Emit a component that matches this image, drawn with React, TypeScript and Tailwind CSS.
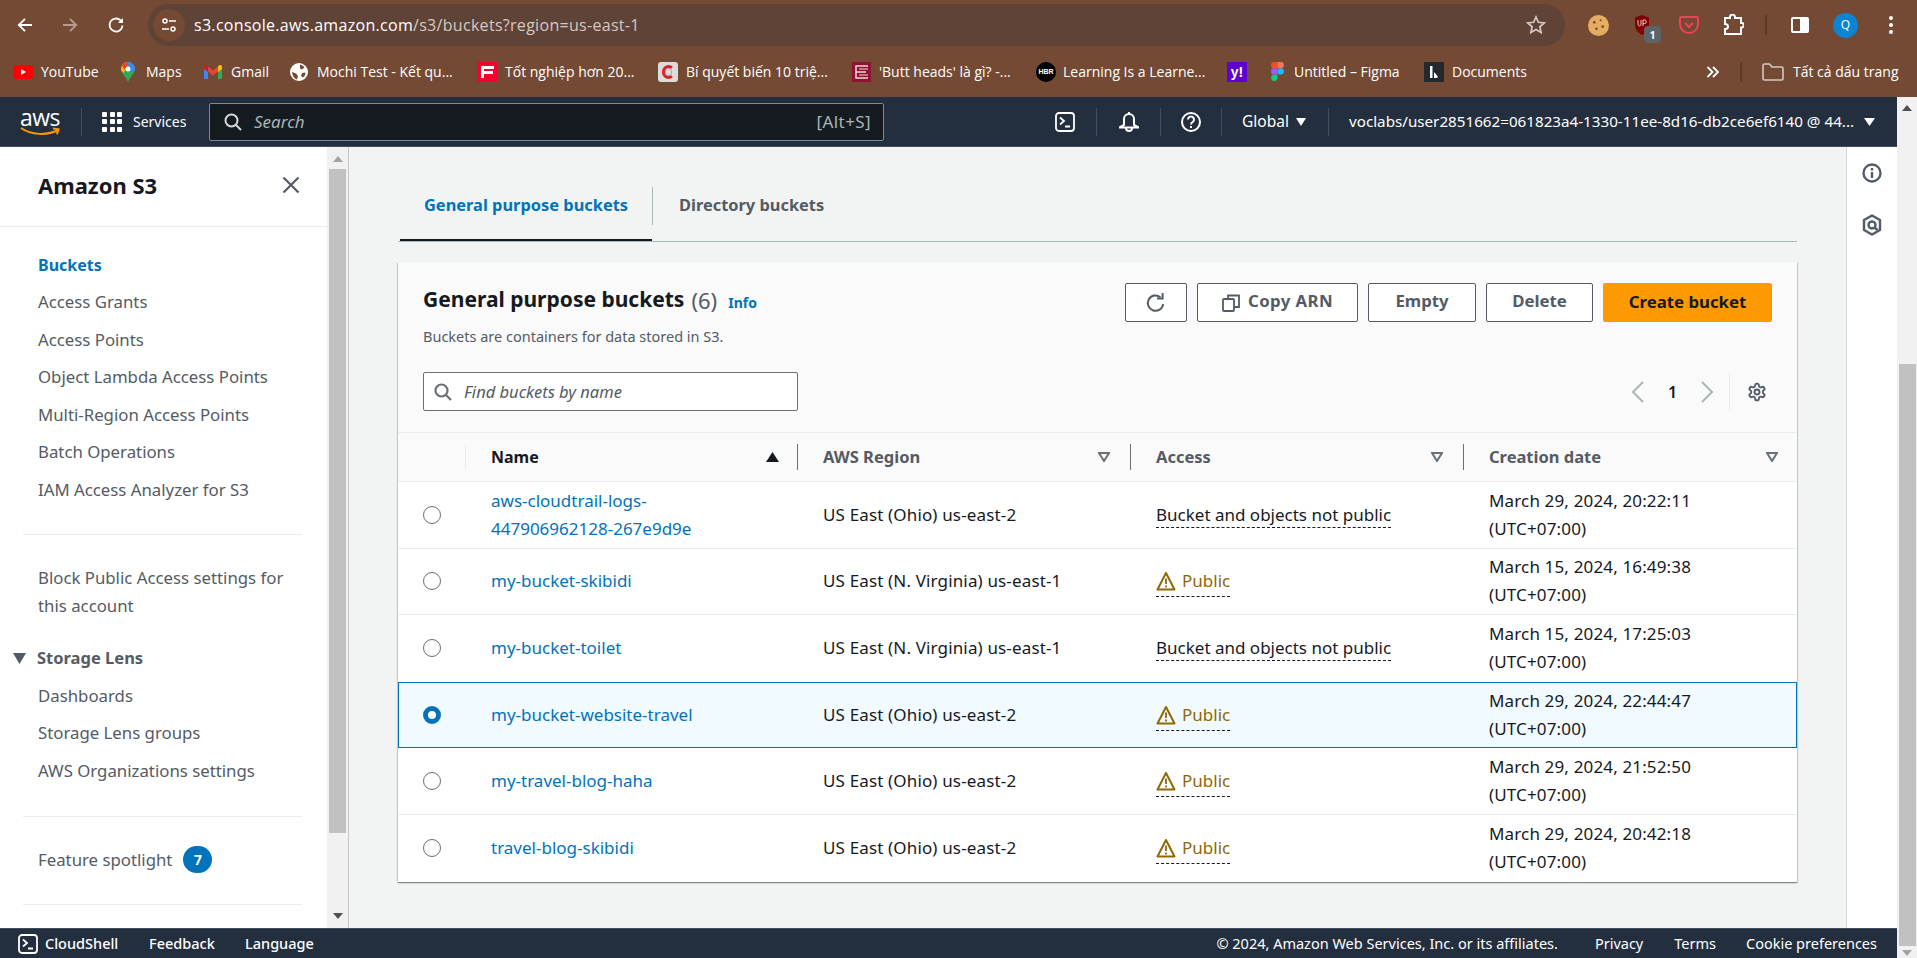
import React from "react";

const ui = "font-['Noto_Sans',sans-serif]";

function Arrow({ flip, className }: { flip?: boolean; className?: string }) {
  return (
    <svg width="18" height="18" viewBox="0 0 18 18" className={className} style={flip ? { transform: "scaleX(-1)" } : undefined} fill="none" stroke="currentColor" strokeWidth="1.8">
      <path d="M16 9H3M9 2.8 2.8 9 9 15.2" />
    </svg>
  );
}

function Terminal({ size = 20 }: { size?: number }) {
  return (
    <svg width={size} height={size} viewBox="0 0 20 20" fill="none" stroke="white" strokeWidth="1.8">
      <rect x="1" y="1" width="18" height="18" rx="3" />
      <path d="M5 5.5 9 9l-4 3.5M10 14.5h5" />
    </svg>
  );
}

function Favicon({ kind }: { kind: string }) {
  switch (kind) {
    case "yt":
      return (
        <svg width="20" height="14" viewBox="0 0 20 14"><rect width="20" height="14" rx="3.5" fill="#f00" /><path d="M8 4v6l5-3z" fill="#fff" /></svg>
      );
    case "maps":
      return (
        <svg width="14" height="20" viewBox="0 0 14 20">
          <path d="M7 0C3 0 0 3 0 7c0 4 4.500 7 7 13 2.500-6 7-9 7-13 0-4-3-7-7-7z" fill="#34a853" />
          <path d="M1 3.500C2 1.500 4 0 7 0l2 .3L2.500 11C1 9.500 0 8.500 0 7c0-1.300.3-2.500 1-3.500z" fill="#fbbc04" />
          <path d="M1 3.500C2 1.500 4 0 7 0v3.500L3.500 8z" fill="#ea4335" />
          <path d="M7 0c2 0 4 .8 5.500 2.800L9.500 5.500 7 3.500z" fill="#4285f4" />
          <path d="M12.500 2.800C13.500 4 14 5.500 14 7c0 .8-.2 1.500-.6 2.300L7 10l2.500-4.500z" fill="#4285f4" />
          <circle cx="7" cy="7" r="2.500" fill="#fff" />
        </svg>
      );
    case "gmail":
      return (
        <svg width="18" height="14" viewBox="0 0 18 14">
          <path d="M0 2v10.700C0 13.400.6 14 1.300 14H4V6z" fill="#4285f4" />
          <path d="M18 2v10.700c0 .7-.6 1.300-1.300 1.300H14V6z" fill="#34a853" />
          <path d="M14 1v6l4-3V2c0-2-1.800-2.500-3-1.500z" fill="#fbbc04" />
          <path d="M4 1v6L0 4V2C0 0 1.800-.5 3 .5z" fill="#c5221f" />
          <path d="M4 1.500 9 5.500l5-4V6.500L9 10.500 4 6.500z" fill="#ea4335" />
        </svg>
      );
    case "globe":
      return (
        <svg width="18" height="18" viewBox="0 0 18 18">
          <circle cx="9" cy="9" r="9" fill="#fff" />
          <path d="M10 1.500c2 .5 3.500 1.500 4.500 3L12 6.500 10 5.500zM2 9l4 1.500L8 13l-1 3.500C4 15.500 2.300 12.500 2 9zM12 10l3.500-.5c0 2-1 4-2.500 5L11 13z" fill="#744a35" />
        </svg>
      );
    case "f":
      return (
        <svg width="20" height="20" viewBox="0 0 20 20"><rect width="20" height="20" fill="#f5002f" /><path d="M4 4h13v3H7v2h9v3H7v4H4z" fill="#fff" /></svg>
      );
    case "c":
      return (
        <div className="w-5 h-5 rounded-[3px] bg-[#dcdcdc] flex items-center justify-center">
          <div className="w-[13px] h-[14px] rounded-full border-[3px] border-[#d8232a] border-r-[#dcdcdc] shadow-[inset_0_0_0_1px_#aaa]" />
        </div>
      );
    case "e":
      return (
        <div className="w-5 h-5 bg-[#8f1233] flex items-center justify-center">
          <svg width="14" height="14" viewBox="0 0 14 14" fill="none" stroke="#f3d6dc" strokeWidth="1.500"><path d="M13 1H1v12h12M1 7h10" /><path d="M4 4h9M4 10h9" strokeWidth="1" /></svg>
        </div>
      );
    case "hbr":
      return (
        <div className="w-5 h-5 rounded-full bg-black flex items-center justify-center text-white text-[7px] font-bold leading-none font-['Liberation_Sans',sans-serif]">HBR</div>
      );
    case "y":
      return (
        <div className="w-5 h-5 bg-[#5f01d1] flex items-center justify-center text-white text-[14px] font-black leading-none font-['Liberation_Sans',sans-serif]">y!</div>
      );
    case "figma":
      return (
        <svg width="13" height="19" viewBox="0 0 13 19">
          <path d="M3.200 0H6.500v6.300H3.200a3.150 3.150 0 0 1 0-6.300z" fill="#f24e1e" />
          <path d="M6.500 0h3.200a3.150 3.150 0 0 1 0 6.300H6.500z" fill="#ff7262" />
          <path d="M3.200 6.300H6.500v6.300H3.200a3.150 3.150 0 0 1 0-6.300z" fill="#a259ff" />
          <circle cx="9.700" cy="9.450" r="3.150" fill="#1abcfe" />
          <path d="M3.200 12.700H6.500v3.100a3.200 3.200 0 1 1-3.300-3.100z" fill="#0acf83" />
        </svg>
      );
    default:
      return (
        <div className="w-5 h-5 bg-[#23282d] flex items-center justify-center">
          <svg width="12" height="14" viewBox="0 0 12 14"><path d="M2 1h2.500v12H2zM6 7l3.500 4v2H6z" fill="#fff" /></svg>
        </div>
      );
  }
}

const bookmarks = [
  { k: "yt", t: "YouTube", l: 13, iw: 20, g: 8, w: 57 },
  { k: "maps", t: "Maps", l: 23, iw: 14, g: 11, w: 36 },
  { k: "gmail", t: "Gmail", l: 22, iw: 18, g: 9, w: 37 },
  { k: "globe", t: "Mochi Test - Kết qu...", l: 22, iw: 18, g: 9, w: 139 },
  { k: "f", t: "Tốt nghiệp hơn 20...", l: 21, iw: 20, g: 8, w: 132 },
  { k: "c", t: "Bí quyết biến 10 triệ...", l: 21, iw: 20, g: 8, w: 144 },
  { k: "e", t: "'Butt heads' là gì? -...", l: 22, iw: 19, g: 8, w: 136 },
  { k: "hbr", t: "Learning Is a Learne...", l: 21, iw: 20, g: 7, w: 142 },
  { k: "y", t: "", l: 22, iw: 20, g: 0, w: 0 },
  { k: "figma", t: "Untitled – Figma", l: 24, iw: 13, g: 10, w: 109 },
  { k: "doc", t: "Documents", l: 21, iw: 20, g: 8, w: 75 },
];

function BrowserChrome() {
  return (
    <div className="h-[97px] shrink-0 bg-[#744a35] text-white font-['Open_Sans',sans-serif]">
      <div className="h-[50px] flex items-start pt-[4px]">
        <div className="w-[148px] h-[42px] flex items-center shrink-0">
          <Arrow className="ml-[16px] text-white" />
          <Arrow flip className="ml-[27px] text-[#b79d90]" />
          <svg width="18" height="18" viewBox="0 0 18 18" className="ml-[28px]" fill="none" stroke="white" strokeWidth="1.800">
            <path d="M15.500 9.500A6.500 6.500 0 1 1 13.600 4.400L15.500 6.300" /><path d="M16 2v5h-5" fill="white" stroke="none" />
          </svg>
        </div>
        <div className="w-[1417px] h-[42px] rounded-full bg-[#5f4337] flex items-center pl-[5px] shrink-0">
          <div className="w-[32px] h-[32px] rounded-full bg-[#744a35] flex items-center justify-center">
            <svg width="16" height="16" viewBox="0 0 16 16" fill="none" stroke="white" strokeWidth="1.500">
              <circle cx="4" cy="4" r="2" /><path d="M8 4h7M1 12h7" /><circle cx="12" cy="12" r="2" />
            </svg>
          </div>
          <div className="ml-[9px] text-[16px] leading-none tracking-[0.3px] whitespace-nowrap">
            <span className="text-white">s3.console.aws.amazon.com</span>
            <span className="text-[#d6c8c1]">/s3/buckets?region=us-east-1</span>
          </div>
          <div className="ml-auto mr-[19px]">
            <svg width="20" height="20" viewBox="0 0 20 20" fill="none" stroke="#d6c8c1" strokeWidth="1.700"><path d="m10 2 2.400 5.300 5.800.6-4.300 3.900 1.200 5.700-5.100-2.900-5.100 2.900 1.200-5.700L1.800 7.900l5.800-.6z" /></svg>
          </div>
        </div>
        <div className="flex-1 h-[42px] flex items-center">
          <svg width="21" height="21" viewBox="0 0 20 20" className="ml-[23px] shrink-0">
            <circle cx="10" cy="10" r="10" fill="#e3ae63" /><circle cx="6" cy="7" r="1.300" fill="#7d4a1f" /><circle cx="12" cy="5" r="1" fill="#7d4a1f" /><circle cx="14" cy="11" r="1.300" fill="#7d4a1f" /><circle cx="8" cy="13" r="1.200" fill="#7d4a1f" />
          </svg>
          <div className="relative ml-[22px] w-[20px] h-[24px] shrink-0">
            <svg width="14" height="20" viewBox="0 0 14 20" className="ml-[4px] mt-[2px]"><path d="M7 0l7 2.500V10c0 5-3.500 8-7 10-3.500-2-7-5-7-10V2.500z" fill="#800000" /><path d="M3 5v4c0 2.500 3 2.500 3 0V5M8 11V5h1.500a1.800 1.800 0 0 1 0 3.600H8" fill="none" stroke="#f3c9c9" strokeWidth="1" /></svg>
            <div className="absolute left-[13px] top-[13px] w-[17px] h-[17px] rounded-[4px] bg-[#5f6368] text-[10px] font-bold flex items-center justify-center leading-none">1</div>
          </div>
          <svg width="20" height="18" viewBox="0 0 20 18" className="ml-[28px] shrink-0" fill="none" stroke="#ef4056" strokeWidth="2"><path d="M1 2.500C1 1.700 1.700 1 2.500 1h15c.8 0 1.500.7 1.500 1.500V8c0 5-4 9-9 9s-9-4-9-9z" /><path d="m6 7 4 4 4-4" /></svg>
          <svg width="22" height="22" viewBox="0 0 22 22" className="ml-[23px] shrink-0" fill="none" stroke="white" strokeWidth="2"><path d="M3 4h5V3a2.500 2.500 0 0 1 5 0v1h6v5h1a2.300 2.300 0 0 1 0 4.500h-1V20H3v-5c2 0 3-1 3-2.500S5 10 3 10z" /></svg>
          <div className="ml-[21px] w-[2px] h-[20px] bg-[#5f3a29] shrink-0" />
          <div className="ml-[24px] w-[18px] h-[16px] border-2 border-white rounded-[2px] flex justify-end shrink-0"><div className="w-[7px] bg-white" /></div>
          <div className="ml-[24px] w-[25px] h-[25px] rounded-full bg-[#0b84d4] flex items-center justify-center text-[12px] shrink-0">Q</div>
          <div className="ml-[31px] flex flex-col gap-[3px] shrink-0">
            <div className="w-[4px] h-[4px] rounded-full bg-white" /><div className="w-[4px] h-[4px] rounded-full bg-white" /><div className="w-[4px] h-[4px] rounded-full bg-white" />
          </div>
        </div>
      </div>
      <div className="h-[47px] flex items-center pb-[4px] text-[14px] leading-none whitespace-nowrap">
        {bookmarks.map((b) => (
          <div key={b.k} className="flex items-center shrink-0" style={{ marginLeft: b.l }}>
            <div className="flex items-center justify-center" style={{ width: b.iw }}><Favicon kind={b.k} /></div>
            {b.t && <div style={{ width: b.w, marginLeft: b.g }}>{b.t}</div>}
          </div>
        ))}
        <svg width="13" height="12" viewBox="0 0 13 12" className="ml-[179px] shrink-0" fill="none" stroke="white" strokeWidth="1.800"><path d="m1.500 1 5 5-5 5M7 1l5 5-5 5" /></svg>
        <div className="ml-[21px] w-[2px] h-[20px] bg-[#5f3a29] shrink-0" />
        <svg width="22" height="18" viewBox="0 0 22 18" className="ml-[20px] shrink-0" fill="none" stroke="#d6c8c1" strokeWidth="1.600"><path d="M1 2.500C1 1.700 1.700 1 2.500 1h5l2.500 3h9.500c.8 0 1.500.7 1.500 1.500v10c0 .8-.7 1.500-1.500 1.500h-17C1.700 17 1 16.300 1 15.500z" /></svg>
        <div className="ml-[9px] shrink-0">Tất cả dấu trang</div>
      </div>
    </div>
  );
}

function NavSep({ className = "" }: { className?: string }) {
  return <div className={`w-px h-[28px] bg-[#414d5c] shrink-0 ${className}`} />;
}

function TopNav() {
  return (
    <div className={`h-[50px] shrink-0 bg-[#232f3e] border-b border-[#414d5c] flex items-center text-white text-[14px] whitespace-nowrap ${ui}`}>
      <div className="ml-[20px] w-[40px] h-[28px] flex flex-col items-center shrink-0">
        <div className="text-[23px] leading-[19px] tracking-[-0.5px] font-['Open_Sans',sans-serif]">aws</div>
        <svg width="40" height="9" viewBox="0 0 40 9" fill="none" stroke="#ff9900" strokeWidth="2"><path d="M1 1c10 7 26 8 37 2M33 1.500l5.500.8-1.500 5" /></svg>
      </div>
      <NavSep className="ml-[21px]" />
      <div className="ml-[20px] grid grid-cols-[repeat(3,5px)] gap-[2.500px] shrink-0">
        {Array.from({ length: 9 }).map((_, i) => <div key={i} className="w-[5px] h-[5px] rounded-[1px] bg-white" />)}
      </div>
      <div className="ml-[11px] w-[56px]">Services</div>
      <div className="ml-[20px] w-[675px] h-[38px] bg-[#161b22] border border-[#7d8998] rounded-[2px] flex items-center shrink-0">
        <svg width="18" height="18" viewBox="0 0 18 18" className="ml-[14px]" fill="none" stroke="#d5dbdb" strokeWidth="2"><circle cx="7.500" cy="7.500" r="6" /><path d="m12 12 5 5" /></svg>
        <div className="ml-[12px] italic text-[#a7b5b6] text-[17px]">Search</div>
        <div className="ml-auto mr-[12px] text-[#a7b5b6] text-[17px] tracking-[0.4px]">[Alt+S]</div>
      </div>
      <div className="ml-[171px] shrink-0"><Terminal /></div>
      <NavSep className="ml-[21px]" />
      <svg width="20" height="21" viewBox="0 0 20 21" className="ml-[22px] shrink-0" fill="none" stroke="white" strokeWidth="2"><path d="M10 1v2M5 14V8a5 5 0 0 1 10 0v6l4 2v.500H1V16z" /><path d="M7 17a3 3 0 0 0 6 0" /></svg>
      <NavSep className="ml-[21px]" />
      <svg width="20" height="20" viewBox="0 0 20 20" className="ml-[20px] shrink-0" fill="none" stroke="white" strokeWidth="2"><circle cx="10" cy="10" r="9" /><path d="M7 7.500a3 3 0 1 1 4.700 2.500c-1 .7-1.700 1.300-1.700 2.500" /><path d="M10 14v2" /></svg>
      <NavSep className="ml-[20px]" />
      <div className="ml-[20px] w-[46px] text-[15.500px]">Global</div>
      <svg width="10" height="8" viewBox="0 0 10 8" className="ml-[8px] shrink-0"><path d="M0 0h10L5 8z" fill="white" /></svg>
      <NavSep className="ml-[22px]" />
      <div className="ml-[20px] w-[507px] shrink-0 text-[15.200px]">voclabs/user2851662=061823a4-1330-11ee-8d16-db2ce6ef6140 @ 44...</div>
      <svg width="11" height="8" viewBox="0 0 11 8" className="ml-[8px] shrink-0"><path d="M0 0h11L5.500 8z" fill="white" /></svg>
    </div>
  );
}

function SideItem({ children, active }: { children: React.ReactNode; active?: boolean }) {
  return <div className={`h-[37.500px] flex items-center pl-[38px] ${active ? "text-[#0073bb] font-bold text-[16px]" : "text-[#545b64]"}`}>{children}</div>;
}

function ScrollArrow({ up, className = "" }: { up?: boolean; className?: string }) {
  return (
    <svg width="10" height="6" viewBox="0 0 10 6" className={`shrink-0 ${className}`}>
      <path d={up ? "M0 6h10L5 0z" : "M0 0h10L5 6z"} fill="currentColor" />
    </svg>
  );
}

function Sidebar() {
  return (
    <div className="w-[349px] shrink-0 flex bg-white border-r border-[#c6c6c6]">
      <div className={`w-[327px] shrink-0 text-[16.800px] leading-[28px] overflow-hidden ${ui}`}>
        <div className="h-[80px] border-b border-[#eaeded] flex items-center justify-between pl-[38px] pr-[27px] pb-[4px]">
          <div className="text-[22px] font-bold text-[#16191f]">Amazon S3</div>
          <svg width="18" height="18" viewBox="0 0 18 18" fill="none" stroke="#545b64" strokeWidth="2.200"><path d="m1.500 1.500 15 15M16.500 1.500l-15 15" /></svg>
        </div>
        <div className="pt-[19px]">
          <SideItem active>Buckets</SideItem>
          <SideItem>Access Grants</SideItem>
          <SideItem>Access Points</SideItem>
          <SideItem>Object Lambda Access Points</SideItem>
          <SideItem>Multi-Region Access Points</SideItem>
          <SideItem>Batch Operations</SideItem>
          <SideItem>IAM Access Analyzer for S3</SideItem>
        </div>
        <div className="mt-[25px] mx-[23px] w-[279px] h-px bg-[#eaeded]" />
        <div className="pt-[29px] pl-[38px] text-[#545b64]">Block Public Access settings for<br />this account</div>
        <div className="mt-[20px] h-[37.500px] flex items-center text-[#545b64] font-bold text-[16.500px] pl-[13px]">
          <svg width="14" height="11" viewBox="0 0 14 11" className="mr-[10px]"><path d="M0 0h13L6.500 11z" fill="#545b64" /></svg>
          Storage Lens
        </div>
        <SideItem>Dashboards</SideItem>
        <SideItem>Storage Lens groups</SideItem>
        <SideItem>AWS Organizations settings</SideItem>
        <div className="mt-[26px] mx-[23px] w-[279px] h-px bg-[#eaeded]" />
        <div className="mt-[28px] h-[30px] pl-[38px] flex items-center text-[#545b64]">
          Feature spotlight
          <div className="ml-[11px] w-[29px] h-[27px] rounded-full bg-[#0073bb] text-white text-[14px] font-bold flex items-center justify-center">7</div>
        </div>
        <div className="mt-[29px] mx-[23px] w-[279px] h-px bg-[#eaeded]" />
      </div>
      <div className="w-[21px] shrink-0 bg-[#f1f1f1] flex flex-col items-center text-[#a3a3a3]">
        <ScrollArrow up className="mt-[9px]" />
        <div className="mt-[7px] w-[17px] h-[664px] bg-[#c1c1c1] -ml-px" />
        <ScrollArrow className="mt-[80px] text-[#505050]" />
      </div>
    </div>
  );
}

function OutlineBtn({ w, children }: { w: string; children: React.ReactNode }) {
  return <div className={`${w} h-[39px] shrink-0 bg-white border border-[#545b64] rounded-[2px] flex items-center justify-center pb-[3px] font-bold text-[#545b64] text-[16.800px]`}>{children}</div>;
}

function FilterIcon() {
  return (
    <svg width="12" height="10" viewBox="0 0 12 10" className="shrink-0"><path d="M1 1h10L6 9z" fill="none" stroke="#687078" strokeWidth="2" /></svg>
  );
}

function Warn() {
  return (
    <svg width="20" height="20" viewBox="0 0 20 20" className="shrink-0" fill="none" stroke="#906806" strokeWidth="2"><path d="M10 2 1.500 18.500h17z" strokeLinejoin="round" /><path d="M10 7.500v5.500M10 14.500v2" strokeWidth="1.800" /></svg>
  );
}

const rows = [
  { n: ["aws-cloudtrail-logs-", "447906962128-267e9d9e"], r: "US East (Ohio) us-east-2", pub: false, d: "March 29, 2024, 20:22:11" },
  { n: ["my-bucket-skibidi"], r: "US East (N. Virginia) us-east-1", pub: true, d: "March 15, 2024, 16:49:38" },
  { n: ["my-bucket-toilet"], r: "US East (N. Virginia) us-east-1", pub: false, d: "March 15, 2024, 17:25:03" },
  { n: ["my-bucket-website-travel"], r: "US East (Ohio) us-east-2", pub: true, d: "March 29, 2024, 22:44:47", sel: true },
  { n: ["my-travel-blog-haha"], r: "US East (Ohio) us-east-2", pub: true, d: "March 29, 2024, 21:52:50" },
  { n: ["travel-blog-skibidi"], r: "US East (Ohio) us-east-2", pub: true, d: "March 29, 2024, 20:42:18" },
];

const cols = "grid grid-cols-[68px_332px_333px_333px_1fr]";

function HeadCell({ label, children, dark }: { label: string; children: React.ReactNode; dark?: boolean }) {
  return (
    <div className={`h-[26px] flex items-center justify-between border-r border-[#687078] pr-[20px] ${dark ? "pl-[25px]" : "pl-[25px] text-[16.500px]"}`}>
      <span className={dark ? "text-[#16191f]" : "text-[#545b64]"}>{label}</span>
      {children}
    </div>
  );
}

function BucketTable() {
  return (
    <div className="text-[16px]">
      <div className={`${cols} h-[50px] items-center border-y border-[#eaeded] font-bold bg-[#fafafa]`}>
        <div className="h-[26px] border-r border-[#eaeded]" />
        <HeadCell label="Name" dark>
          <svg width="13" height="10" viewBox="0 0 13 10" className="-mr-[2px]"><path d="M0 10h13L6.500 0z" fill="#16191f" /></svg>
        </HeadCell>
        <HeadCell label="AWS Region"><FilterIcon /></HeadCell>
        <HeadCell label="Access"><FilterIcon /></HeadCell>
        <div className="h-[26px] flex items-center justify-between pl-[25px] pr-[19px] text-[16.500px] text-[#545b64]">
          <span>Creation date</span><FilterIcon />
        </div>
      </div>
      <div className="bg-white text-[17px]">
        {rows.map((r, i) => (
          <div key={i} className={`${cols} h-[66.600px] items-center leading-[28px] text-[#16191f] ${r.sel ? "bg-[#f1faff] outline outline-1 -outline-offset-1 outline-[#0073bb]" : i === 5 || i === 2 ? "" : "border-b border-[#eaeded]"}`}>
            <div className="flex justify-center">
              {r.sel
                ? <div className="w-[18px] h-[18px] rounded-full border-[5px] border-[#0073bb] bg-white" />
                : <div className="w-[18px] h-[18px] rounded-full border border-[#687078] bg-white" />}
            </div>
            <div className="pl-[25px] text-[#0073bb]">{r.n.map((l) => <div key={l}>{l}</div>)}</div>
            <div className="pl-[25px] tracking-[0.15px]">{r.r}</div>
            <div className="pl-[25px]">
              {r.pub
                ? <div className="flex w-fit mt-[6px] pb-[5px] items-center border-b border-dashed border-[#16191f] leading-[20px] text-[#906806]"><Warn /><span className="ml-[6px]">Public</span></div>
                : <div className="inline-block border-b border-dashed border-[#16191f] leading-[24px]">Bucket and objects not public</div>}
            </div>
            <div className="pl-[25px] tracking-[0.15px]"><div>{r.d}</div><div>(UTC+07:00)</div></div>
          </div>
        ))}
      </div>
    </div>
  );
}

function Main() {
  return (
    <div className={`flex-1 min-w-0 px-[49px] pt-[40px] bg-[#f2f3f3] ${ui}`}>
      <div className="h-[55px] flex border-b border-[#aab7b8] font-bold text-[16.400px]">
        <div className="ml-[2px] w-[252px] h-[54px] border-b-2 border-[#16191f] pl-[24px] pt-[4px] text-[#0073bb] leading-[28px]">General purpose buckets</div>
        <div className="w-px h-[38px] bg-[#aab7b8]" />
        <div className="pl-[26px] pt-[4px] text-[#545b64] leading-[28px]">Directory buckets</div>
      </div>
      <div className="mt-[20px] bg-[#fafafa] shadow-[0_1px_1px_0_rgba(0,28,36,0.3),1px_1px_1px_0_rgba(0,28,36,0.15),-1px_1px_1px_0_rgba(0,28,36,0.15)]">
        <div className="pt-[21px] pl-[25px] pr-[25px] pb-[21px]">
          <div className="flex justify-between">
            <div>
              <div className="h-[34px] flex items-center">
                <span className="text-[21px] font-bold text-[#16191f]">General purpose buckets</span>
                <span className="ml-[7px] text-[22px] text-[#545b64]">(6)</span>
                <span className="ml-[11px] mt-[4px] text-[14px] font-bold text-[#0073bb]">Info</span>
              </div>
              <div className="mt-[10px] h-[20px] flex items-center text-[14.500px] text-[#545b64]">Buckets are containers for data stored in S3.</div>
            </div>
            <div className="flex gap-[10px]">
              <OutlineBtn w="w-[62px]">
                <svg width="22" height="22" viewBox="0 0 20 20" className="mt-[3px]" fill="none" stroke="#545b64" strokeWidth="1.800"><path d="M16.500 11a7 7 0 1 1-2.500-6.300" /><path d="M16 1v5h-5" /></svg>
              </OutlineBtn>
              <OutlineBtn w="w-[161px]">
                <svg width="18" height="18" viewBox="0 0 18 18" className="mr-[8px] mt-[3px]" fill="none" stroke="#545b64" strokeWidth="1.800"><rect x="1" y="5" width="11" height="12" rx="1" /><path d="M6 5V1.500h11V13h-5" /></svg>
                <span className="tracking-[0.4px]">Copy ARN</span>
              </OutlineBtn>
              <OutlineBtn w="w-[108px]">Empty</OutlineBtn>
              <OutlineBtn w="w-[107px]">Delete</OutlineBtn>
              <div className="w-[169px] h-[39px] bg-[#ff9900] rounded-[2px] flex items-center justify-center pb-[2px] font-bold text-[16.800px] text-[#16191f]">Create bucket</div>
            </div>
          </div>
          <div className="mt-[25px] flex items-center justify-between">
            <div className="w-[375px] h-[39px] bg-white border border-[#687078] rounded-[2px] flex items-center">
              <svg width="18" height="18" viewBox="0 0 18 18" className="ml-[10px]" fill="none" stroke="#687078" strokeWidth="2.200"><circle cx="7.500" cy="7.500" r="6" /><path d="m12 12 5 5" /></svg>
              <span className="ml-[12px] mt-[2px] italic text-[16.500px] text-[#545b64]">Find buckets by name</span>
            </div>
            <div className="flex items-center h-[39px] pr-[5px]">
              <svg width="14" height="22" viewBox="0 0 14 22" fill="none" stroke="#aab7b8" strokeWidth="2"><path d="M12 1 2 11l10 10" /></svg>
              <span className="ml-[23px] w-[9px] text-[16px] font-semibold text-[#16191f]">1</span>
              <svg width="14" height="22" viewBox="0 0 14 22" className="ml-[23px]" fill="none" stroke="#aab7b8" strokeWidth="2"><path d="m2 1 10 10L2 21" /></svg>
              <div className="ml-[15px] w-px h-[39px] bg-[#eaeded]" />
              <svg width="20" height="20" viewBox="0 0 24 24" className="ml-[17px]" fill="none" stroke="#545b64" strokeWidth="2.200" strokeLinecap="round" strokeLinejoin="round">
                <path d="M12.220 2h-.44a2 2 0 0 0-2 2v.18a2 2 0 0 1-1 1.730l-.43.250a2 2 0 0 1-2 0l-.15-.080a2 2 0 0 0-2.730.730l-.22.380a2 2 0 0 0 .730 2.730l.15.100a2 2 0 0 1 1 1.720v.510a2 2 0 0 1-1 1.740l-.15.090a2 2 0 0 0-.730 2.730l.22.380a2 2 0 0 0 2.730.730l.15-.080a2 2 0 0 1 2 0l.43.250a2 2 0 0 1 1 1.730V20a2 2 0 0 0 2 2h.44a2 2 0 0 0 2-2v-.18a2 2 0 0 1 1-1.730l.43-.250a2 2 0 0 1 2 0l.15.080a2 2 0 0 0 2.730-.730l.22-.390a2 2 0 0 0-.730-2.730l-.15-.080a2 2 0 0 1-1-1.740v-.5a2 2 0 0 1 1-1.740l.15-.090a2 2 0 0 0 .730-2.730l-.22-.380a2 2 0 0 0-2.730-.730l-.15.080a2 2 0 0 1-2 0l-.43-.250a2 2 0 0 1-1-1.730V4a2 2 0 0 0-2-2z" />
                <circle cx="12" cy="12" r="3" />
              </svg>
            </div>
          </div>
        </div>
        <BucketTable />
      </div>
    </div>
  );
}

function RightRail() {
  return (
    <div className="w-[51px] shrink-0 bg-white border-l border-[#d5dbdb] flex flex-col items-center pt-[16px]">
      <svg width="20" height="20" viewBox="0 0 20 20" fill="none" stroke="#545b64" strokeWidth="2.400"><circle cx="10" cy="10" r="8.500" /><path d="M10 9v6M10 5v2.500" /></svg>
      <svg width="20" height="22" viewBox="0 0 20 22" className="mt-[31px]" fill="none" stroke="#545b64" strokeWidth="2.400"><path d="m10 1.500 8 4.500v10l-8 4.500L2 16V6z" strokeLinejoin="round" /><circle cx="10" cy="11" r="3.500" /><path d="m12.500 13.500 3 2.500" /></svg>
    </div>
  );
}

function Footer() {
  return (
    <div className={`h-[30px] shrink-0 bg-[#232f3e] border-t border-[#414d5c] flex items-center text-white text-[14.500px] whitespace-nowrap ${ui}`}>
      <div className="ml-[18px] shrink-0"><Terminal /></div>
      <span className="ml-[7px] w-[73px] font-medium">CloudShell</span>
      <span className="ml-[31px] w-[64px] font-medium">Feedback</span>
      <span className="ml-[32px] font-medium">Language</span>
      <span className="ml-auto">© 2024, Amazon Web Services, Inc. or its affiliates.</span>
      <span className="ml-[37px]">Privacy</span>
      <span className="ml-[31px]">Terms</span>
      <span className="ml-[30px] mr-[20px]">Cookie preferences</span>
    </div>
  );
}

export default function App() {
  return (
    <div className="h-screen w-full flex flex-col overflow-hidden">
      <BrowserChrome />
      <div className="flex-1 min-h-0 flex">
        <div className="flex-1 min-w-0 flex flex-col">
          <TopNav />
          <div className="flex-1 min-h-0 flex overflow-hidden">
            <Sidebar />
            <Main />
            <RightRail />
          </div>
          <Footer />
        </div>
        <div className="w-[20px] shrink-0 bg-[#f1f1f1] flex flex-col items-center text-[#505050]">
          <ScrollArrow up className="mt-[8px]" />
          <div className="mt-[253px] w-[17px] h-[582px] bg-[#c1c1c1]" />
          <ScrollArrow className="mt-[4px] text-[#a3a3a3]" />
        </div>
      </div>
    </div>
  );
}
